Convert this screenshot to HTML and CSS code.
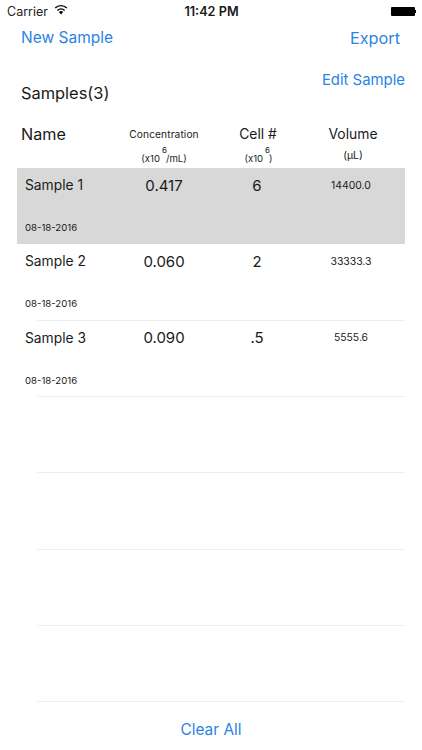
FILE: index.html
```html
<!DOCTYPE html>
<html lang="en">
<head>
<meta charset="utf-8">
<title>Samples</title>
<link rel="stylesheet" href="styles.css">
</head>
<body>
<div class="screen">
  <div class="status">
    <div class="status-left">
      <span>Carrier</span>
      <svg class="wifi" width="14" height="11" viewBox="0 0 14 11"><path d="M7 10.5 4.9 8a3 3 0 0 1 4.2 0z" fill="#000"/><path d="M3.4 6.4a5.2 5.2 0 0 1 7.2 0M1.2 4a8.3 8.3 0 0 1 11.6 0" fill="none" stroke="#000" stroke-width="1.4"/></svg>
    </div>
    <div class="status-time">11:42 PM</div>
    <div class="status-right"><span class="battery"></span><span class="battery-tip"></span></div>
  </div>
  <div class="nav">
    <span class="link new">New Sample</span>
    <span class="link export">Export</span>
  </div>
  <div class="title-row">
    <span class="title">Samples(3)</span>
    <span class="link edit">Edit Sample</span>
  </div>
  <div class="cols head">
    <div class="hname">Name</div>
    <div class="hcol hconc"><div class="hsmall">Concentration</div><div class="unit">(x10<sup>6</sup>/mL)</div></div>
    <div class="hcol"><div class="hbig hcell">Cell #</div><div class="unit ucell">(x10<sup>6</sup>)</div></div>
    <div class="hcol"><div class="hbig">Volume</div><div class="unit unit-v">(µL)</div></div>
  </div>
  <div class="list">
    <div class="row selected">
      <div class="cols"><div class="name">Sample 1</div><div class="val vconc">0.417</div><div class="val">6</div><div class="vol">14400.0</div></div>
      <div class="date">08-18-2016</div>
    </div>
    <div class="row">
      <div class="cols"><div class="name">Sample 2</div><div class="val vconc">0.060</div><div class="val">2</div><div class="vol">33333.3</div></div>
      <div class="date">08-18-2016</div>
    </div>
    <div class="row">
      <div class="cols"><div class="name">Sample 3</div><div class="val vconc">0.090</div><div class="val">.5</div><div class="vol">5555.6</div></div>
      <div class="date">08-18-2016</div>
    </div>
    <div class="row empty"></div>
    <div class="row empty"></div>
    <div class="row empty"></div>
    <div class="row empty"></div>
  </div>
  <div class="clear"><span class="link">Clear All</span></div>
</div>
</body>
</html>
```
FILE: styles.css
```css
* { box-sizing: border-box; }
html, body { margin: 0; padding: 0; background: #fff; }
.screen {
  width: 422px;
  height: 750px;
  overflow: hidden;
  font-family: Inter, "Liberation Sans", sans-serif;
  color: #1a1a1a;
}
.status {
  display: grid;
  grid-template-columns: 1fr auto 1fr;
  align-items: center;
  height: 22px;
  padding: 0 6px 0 7px;
  font-size: 12.5px;
}
.status-left { display: flex; align-items: center; gap: 6px; color: #222; }
.wifi { margin-top: -3px; }
.status-time { font-weight: 600; font-size: 12.7px; }
.status-right { display: flex; justify-content: flex-end; align-items: center; }
.battery { width: 24px; height: 9px; background: #000; border-radius: 1px; }
.battery-tip { width: 1.5px; height: 3px; background: #000; }
.link { color: #2b84e4; }
.nav {
  display: flex;
  justify-content: space-between;
  align-items: center;
  height: 30px;
  padding: 0 22px 0 21px;
}
.new { font-size: 15.5px; }
.export { font-size: 16.3px; margin-top: 2px; }
.title-row {
  display: flex;
  justify-content: space-between;
  height: 68px;
  padding: 18px 17px 0 21px;
}
.title { font-size: 16.4px; margin-top: 13px; line-height: 20px; }
.edit { font-size: 14.9px; line-height: 20px; }
.cols {
  display: grid;
  grid-template-columns: 100px 96px 88px 104px;
  margin: 0 17px;
}
.head { height: 48px; align-items: start; padding-top: 3px; margin-left: 21px; grid-template-columns: 96px 96px 88px 104px; }
.hname { font-size: 16.2px; line-height: 22px; }
.hcol { text-align: center; }
.hconc { padding-right: 2px; }
.hsmall { font-size: 10.2px; line-height: 22px; letter-spacing: 0.1px; }
.hbig { font-size: 13.9px; line-height: 22px; }
.hcell { padding-left: 2px; }
.unit { font-size: 9.6px; line-height: 14px; margin-top: 1px; }
.ucell { padding-left: 3px; }
.unit-v { font-size: 10.4px; margin-top: 4px; }
.unit sup {
  display: inline-block;
  font-size: 8px;
  line-height: 8px;
  vertical-align: 9px;
  margin: 0 -1px 0 2px;
}
.row {
  height: 76.33px;
  border-bottom: 1px solid #eee;
  margin-left: 37px;
  margin-right: 17px;
}
.row .cols { margin: 0 0 0 -20px; height: 34px; align-items: center; }
.row.selected { background: #d8d8d8; margin-left: 17px; border-bottom: 0; }
.row.selected .cols { margin-left: 0; }
.row.selected .date { margin-left: 8px; }
.name { font-size: 13.8px; padding-left: 8px; }
.val { font-size: 15px; text-align: center; }
.vconc { padding-right: 2px; }
.vol { font-size: 10.4px; text-align: center; padding-right: 4px; }
.date { font-size: 9.6px; line-height: 12px; margin: 20px 0 0 -12px; }
.clear { text-align: center; font-size: 15.4px; padding-top: 18px; }
```
